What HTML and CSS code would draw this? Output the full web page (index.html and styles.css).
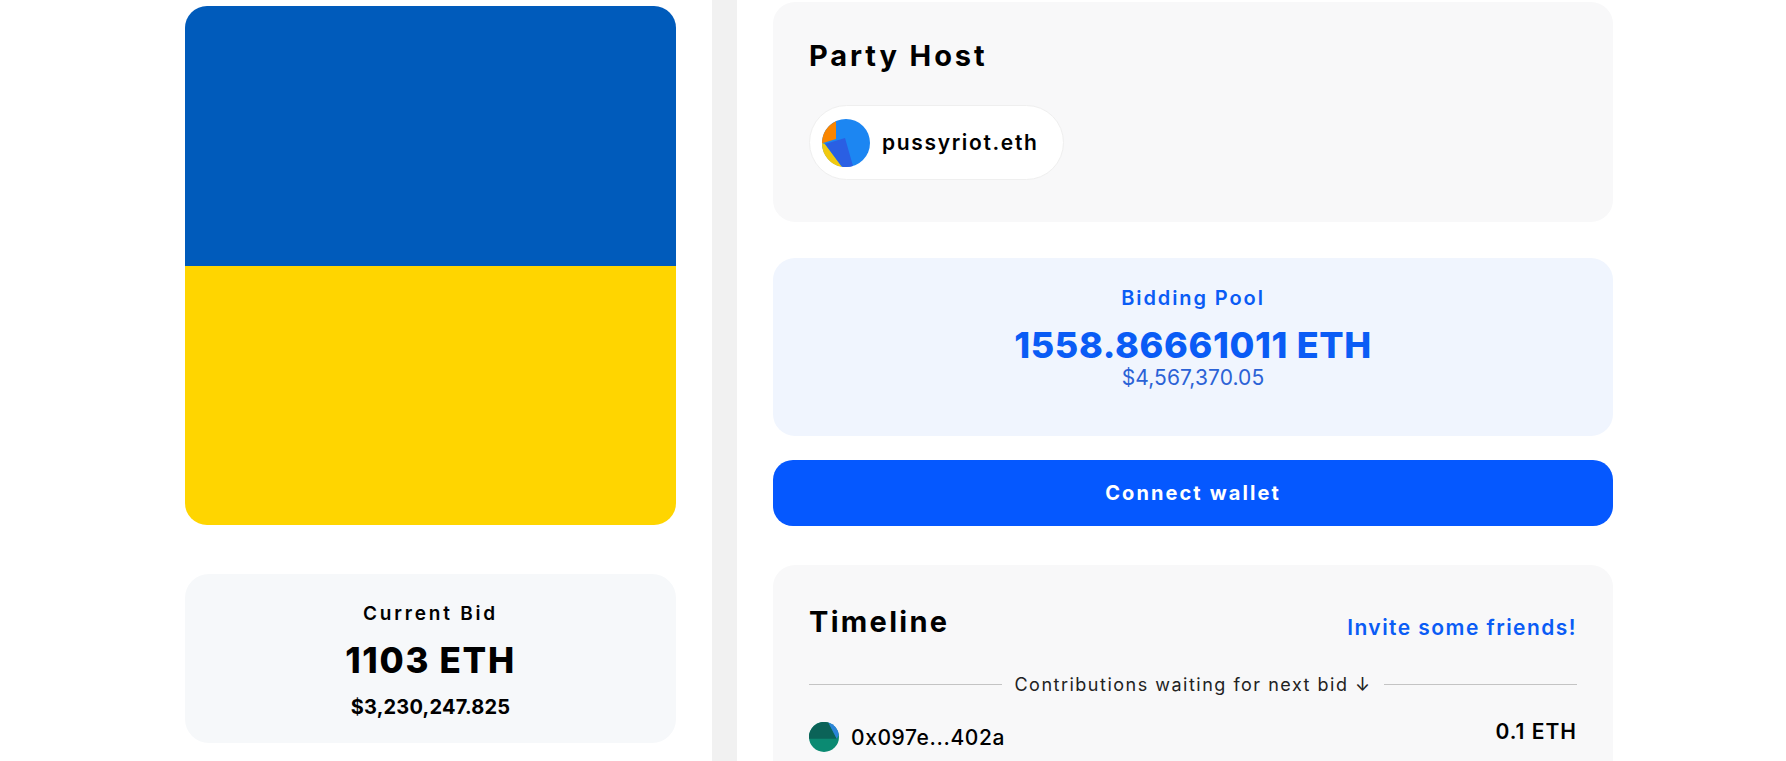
FILE: index.html
```html
<!DOCTYPE html>
<html lang="en">
<head>
    <meta charset="UTF-8">
    <meta name="viewport" content="width=device-width, initial-scale=1.0">
    <title>Party</title>
    <link rel="stylesheet" href="styles.css">
</head>
<body>
    <div class="page">
        <div class="left-col">
            <div class="flag">
                <div class="flag-blue"></div>
                <div class="flag-yellow"></div>
            </div>
            <div class="bid-card">
                <div class="bid-label">Current Bid</div>
                <div class="bid-eth">1103 ETH</div>
                <div class="bid-usd">$3,230,247.825</div>
            </div>
        </div>
        <div class="divider"></div>
        <div class="right-col">
            <div class="card host-card">
                <h2 class="card-title">Party Host</h2>
                <div class="host-pill">
                    <svg class="host-avatar" viewBox="0 0 48 48">
                        <circle cx="24" cy="24" r="24" fill="#1c86f2"/>
                        <path d="M0 24A24 24 0 0 1 14 2.200L14 20L1 24Z" fill="#f98500"/>
                        <path d="M0 24L3 25L20 48A24 24 0 0 1 0 24Z" fill="#f1c90f"/>
                        <path d="M3 25L23 19L31 46.900A24 24 0 0 1 20 47.700Z" fill="#2a5fe3"/>
                    </svg>
                    <span class="host-name">pussyriot.eth</span>
                </div>
            </div>
            <div class="pool-card">
                <div class="pool-label">Bidding Pool</div>
                <div class="pool-eth">1558.86661011 ETH</div>
                <div class="pool-usd">$4,567,370.05</div>
            </div>
            <button class="connect-btn">Connect wallet</button>
            <div class="card timeline-card">
                <div class="timeline-head">
                    <h2 class="card-title timeline-title">Timeline</h2>
                    <a class="invite-link" href="#">Invite some friends!</a>
                </div>
                <div class="timeline-sep">
                    <span class="sep-line"></span>
                    <span class="sep-text">Contributions waiting for next bid ↓</span>
                    <span class="sep-line"></span>
                </div>
                <div class="timeline-row">
                    <div class="row-who">
                        <svg class="row-avatar" viewBox="0 0 30 30">
                            <circle cx="15" cy="15" r="15" fill="#0b8a72"/>
                            <path d="M0 16.700A15 15 0 0 1 19.300 .6L27.700 16.700Z" fill="#0b6358"/>
                            <path d="M19.300 .6A15 15 0 0 1 29.800 13L27.700 16.700Z" fill="#2b84d8"/>
                        </svg>
                        <span class="row-addr">0x097e...402a</span>
                    </div>
                    <span class="row-amount">0.1 ETH</span>
                </div>
            </div>
        </div>
    </div>
</body>
</html>
```

FILE: styles.css
```css
html, body {
    margin: 0;
    height: 100%;
    overflow: hidden;
    background: #fff;
}

body {
    font-family: 'Inter', 'Liberation Sans', sans-serif;
    color: #000;
}

.page {
    display: flex;
    align-items: stretch;
    height: 761px;
    padding-left: 185px;
}

.left-col {
    width: 491px;
    padding-top: 6px;
}

.flag {
    height: 519px;
    border-radius: 22px;
    overflow: hidden;
    display: flex;
    flex-direction: column;
}

.flag-blue {
    flex: 1;
    background: #005bbb;
}

.flag-yellow {
    flex: 1;
    background: #ffd500;
}

.bid-card {
    margin-top: 49px;
    height: 169px;
    box-sizing: border-box;
    padding-top: 28px;
    background: #f6f8fa;
    border-radius: 24px;
    text-align: center;
}

.bid-label {
    font-size: 19px;
    font-weight: 600;
    letter-spacing: 2.800px;
    line-height: 24px;
}

.bid-eth {
    margin-top: 12px;
    font-size: 35px;
    font-weight: 800;
    letter-spacing: 1.700px;
    line-height: 44px;
}

.bid-usd {
    margin-top: 12px;
    font-size: 20px;
    font-weight: 700;
    letter-spacing: 0.200px;
    line-height: 26px;
}

.divider {
    width: 25px;
    margin-left: 36px;
    background: #f1f1f1;
}

.right-col {
    width: 840px;
    margin-left: 36px;
}

.card {
    background: #f8f8f9;
    border-radius: 22px;
}

.host-card {
    height: 220px;
    margin-top: 2px;
    box-sizing: border-box;
    padding: 36px 36px 0;
}

.card-title {
    margin: 0;
    font-size: 29px;
    font-weight: 700;
    letter-spacing: 2.900px;
    line-height: 36px;
}

.timeline-title {
    letter-spacing: 2.300px;
}

.host-pill {
    display: inline-flex;
    align-items: center;
    gap: 12px;
    margin-top: 31px;
    height: 75px;
    box-sizing: border-box;
    padding: 0 24px 0 12px;
    background: #fff;
    border: 1px solid #efefef;
    border-radius: 38px;
}

.host-avatar {
    width: 48px;
    height: 48px;
}

.host-name {
    font-size: 21px;
    font-weight: 600;
    letter-spacing: 1.650px;
}

.pool-card {
    margin-top: 36px;
    height: 178px;
    box-sizing: border-box;
    padding-top: 27px;
    background: #f0f5fe;
    border-radius: 22px;
    text-align: center;
    color: #0a5cf5;
}

.pool-label {
    font-size: 20px;
    font-weight: 600;
    letter-spacing: 1.900px;
    line-height: 26px;
}

.pool-eth {
    margin-top: 12px;
    font-size: 36px;
    font-weight: 800;
    letter-spacing: 0.650px;
    line-height: 44px;
}

.pool-usd {
    margin-top: -2px;
    font-size: 21px;
    letter-spacing: 0.100px;
    line-height: 26px;
    color: #2b62d6;
}

.connect-btn {
    display: block;
    width: 100%;
    height: 66px;
    margin-top: 24px;
    background: #0558ff;
    color: #fff;
    border: none;
    border-radius: 20px;
    font-family: inherit;
    font-size: 20px;
    font-weight: 700;
    letter-spacing: 2.100px;
}

.timeline-card {
    margin-top: 39px;
    height: 196px;
    box-sizing: border-box;
    padding: 39px 36px 0;
    border-radius: 22px 22px 0 0;
}

.timeline-head {
    display: flex;
    justify-content: space-between;
    align-items: center;
}

.invite-link {
    margin-top: 10px;
    font-size: 21px;
    font-weight: 600;
    letter-spacing: 1.450px;
    color: #0a5cf5;
    text-decoration: none;
}

.timeline-sep {
    display: flex;
    align-items: center;
    gap: 12px;
    margin-top: 34px;
}

.sep-line {
    flex: 1;
    height: 1px;
    background: #c4c4c4;
}

.sep-text {
    font-size: 18px;
    letter-spacing: 1.500px;
    color: #222;
}

.timeline-row {
    display: flex;
    justify-content: space-between;
    margin-top: 25px;
}

.row-who {
    display: flex;
    align-items: center;
    gap: 12px;
    padding-top: 2px;
}

.row-avatar {
    width: 30px;
    height: 30px;
}

.row-addr {
    font-size: 21px;
    font-weight: 500;
    letter-spacing: 0.600px;
}

.row-amount {
    font-size: 21px;
    font-weight: 600;
    letter-spacing: 1px;
    line-height: 24px;
}
```
